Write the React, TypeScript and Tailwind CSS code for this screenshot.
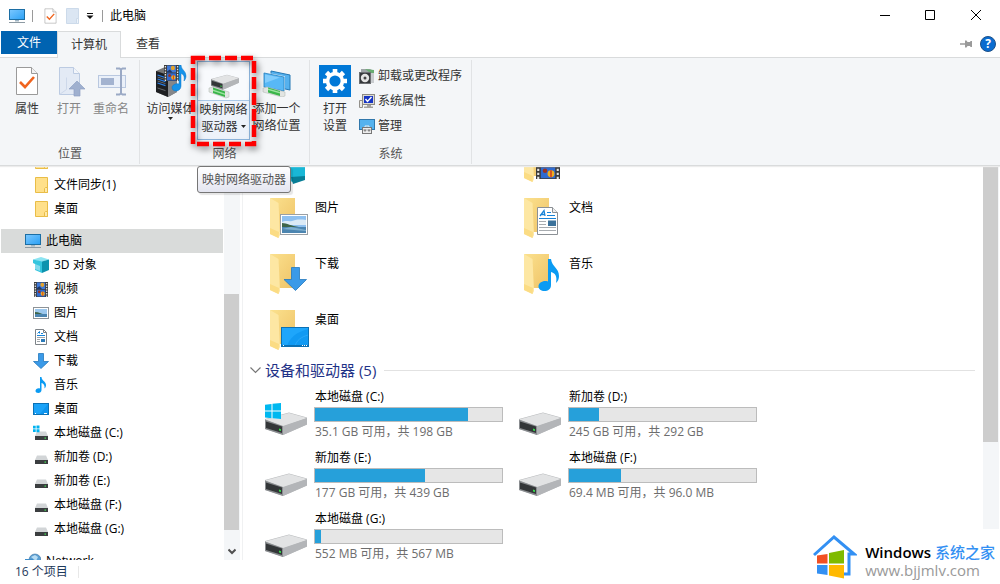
import type { ReactNode } from "react";

type IconProps = { className?: string };

function MonitorIcon({ className = "h-4 w-4" }: IconProps) {
  return (
    <svg viewBox="0 0 16 16" className={className} aria-hidden="true">
      <defs>
        <linearGradient id="screen" x1="0" y1="0" x2="1" y2="1">
          <stop offset="0" stopColor="#7cc8ff" />
          <stop offset="1" stopColor="#2aa0f5" />
        </linearGradient>
      </defs>
      <rect x="0.5" y="1.5" width="15" height="10" fill="url(#screen)" stroke="#1c6ea4" />
      <path d="M6 12h4v1.500H6z" fill="#9fb4c3" />
      <path d="M0 14.500h16" stroke="#8d9aa3" />
    </svg>
  );
}

function CheckDocIcon({ className }: IconProps) {
  return (
    <svg viewBox="0 0 24 30" className={className} aria-hidden="true">
      <path d="M1.500 1.500h15l6 6v21h-21z" fill="#fff" stroke="#9a9a9a" />
      <path d="M16.500 1.500v6h6" fill="#f2f2f2" stroke="#9a9a9a" />
      <path d="M5 16l5 5 9-10" fill="none" stroke="#f0641e" strokeWidth="2.600" />
    </svg>
  );
}

function OpenIcon() {
  return (
    <svg viewBox="0 0 32 32" className="h-8 w-8" aria-hidden="true">
      <path d="M6.500 2.500h14l6 6v21h-20z" fill="#e3eaf5" stroke="#bccbe2" />
      <path d="M20.500 2.500v6h6" fill="#f2f5fa" stroke="#bccbe2" />
      <path d="M6.500 29.500l7-5v-12" fill="none" stroke="#cdd8ea" />
      <path d="M24 16l8 8h-5v7h-6v-7h-5z" fill="#9fb0cf" stroke="#8fa2c4" strokeWidth="0.700" />
    </svg>
  );
}

function RenameIcon() {
  return (
    <svg viewBox="0 0 32 32" className="h-8 w-8" aria-hidden="true">
      <rect x="3.500" y="10.500" width="27" height="12" fill="#eaf0f9" stroke="#b9c8e0" />
      <rect x="6" y="13" width="13" height="7" fill="#a3b3d0" />
      <path d="M21 3.500h3.500l1.500 1 1.500-1H31M26 4.500v24M21 29.500h3.500l1.500-1 1.500 1H31" fill="none" stroke="#9aa9c5" strokeWidth="2" />
    </svg>
  );
}

function FilmStrip({ x, y, w, h }: { x: number; y: number; w: number; h: number }) {
  return (
    <svg x={x} y={y} width={w} height={h} viewBox="0 0 16 16" preserveAspectRatio="none">
      <rect width="16" height="16" fill="#3b3b3b" />
      <path d="M1.500 1v15M14.500 1v15" stroke="#e4e4e4" strokeWidth="1.400" strokeDasharray="1.500 1.200" />
      <rect x="3.200" y="0.500" width="9.600" height="7" fill="#3f79d8" />
      <rect x="3.200" y="8.300" width="9.600" height="7.200" fill="#2f6bd0" />
      <circle cx="9.500" cy="3" r="2.200" fill="#e4a32b" />
      <path d="M3.200 6.500l3-2 3 3h-6z" fill="#1d3768" />
      <circle cx="10" cy="12.500" r="2.300" fill="#f0b020" />
      <path d="M10 10.200v4.600" stroke="#d23b20" />
      <circle cx="6" cy="10.500" r="1.500" fill="#9b3320" />
    </svg>
  );
}

function MediaIcon() {
  return (
    <svg viewBox="0 0 32 32" className="h-8 w-8" aria-hidden="true">
      <path d="M1 6l9-4 12 4v21l-9 5-12-5z" fill="#777" />
      <path d="M1 6l12 4v22L1 27z" fill="#1d1f22" />
      <path d="M13 10l9-4v21l-9 5z" fill="#85878a" />
      <path d="M2.500 10l8 2.600M2.500 14l8 2.600M2.500 18l8 2.600" stroke="#2b7fe6" strokeWidth="1.300" />
      <path d="M2.500 12l8 2.600M2.500 16l8 2.600M2.500 23l8 2.600" stroke="#64686d" />
      <FilmStrip x={9} y={0} w={15} h={16} />
      <path d="M24 0h2c0 5 5 5.500 5 11 0 2-1 4-2 5 1-5-1-7-3-7.500V21c0 3-2.500 5-5 5s-4-1.500-4-3.500 3-4.500 7-3.500z" fill="#1593ea" stroke="#0d74c4" strokeWidth="0.500" />
    </svg>
  );
}

function DriveShape() {
  return (
    <>
      <path d="M0 16L24 9.500l18 5v7L18 32 0 26z" fill="#b8babc" />
      <path d="M0 16.500L24 10l18 5-24 8.500z" fill="#e2e3e4" />
      <path d="M18 23l24-8v6.500L18 32z" fill="#b3b5b8" />
      <path d="M0 16.500L18 23v9L0 26z" fill="#8a8d90" />
      <path d="M1 18.500l16 5v6.500L1 25z" fill="#333638" />
      <path d="M14 25.600l2 .7v1.700l-2-.6z" fill="#36e04b" />
    </>
  );
}

function DriveIcon({ system = false }: { system?: boolean }) {
  return (
    <svg viewBox="0 0 42 32" className="h-8 w-[42px]" aria-hidden="true">
      <DriveShape />
      {system && (
        <>
          <path d="M0 1.500L16 0v16L0 14.500z" fill="#fff" />
          <path d="M0 1.800l6.500-.9v6.600H0zM7.500.8L16 0v7.500H7.500zM0 8.500h6.500v6.700L0 14.500zM7.500 8.500H16V16l-8.500-.8z" fill="#00b8f0" />
        </>
      )}
    </svg>
  );
}

function MapDriveIcon() {
  return (
    <svg viewBox="0 0 32 32" className="h-8 w-8" aria-hidden="true">
      <path d="M1 21l4-1 16 5v5l-3 1-17-6z" fill="#e2e5e2" stroke="#aeb4ae" strokeWidth="0.500" />
      <path d="M5 20.500l12 4V30L5 26z" fill="#3bb54a" />
      <path d="M5 22.500l12 4v1.500l-12-4z" fill="#9be49f" />
      <svg x="3" y="1" width="28" height="22" viewBox="0 0 42 32">
        <DriveShape />
      </svg>
    </svg>
  );
}

function NetworkPlaceIcon() {
  return (
    <svg viewBox="0 0 32 32" className="h-8 w-8" aria-hidden="true">
      <path d="M10 6l19 4v15l-19-4z" fill="#55b1ee" stroke="#2578b4" />
      <path d="M3 8l20 4v14L3 22z" fill="#4fb0f4" stroke="#e6f2fb" strokeWidth="1.600" />
      <path d="M3 8l20 4v14L3 22z" fill="#58b8f6" stroke="#2a80bd" strokeWidth="0.800" />
      <path d="M4 9.500l15 3L4 18z" fill="#83cdfc" />
      <path d="M2 23l4-1 18 5v4l-3 1-19-5z" fill="#e2e5e2" stroke="#aeb4ae" strokeWidth="0.500" />
      <path d="M7 22.500l12 3.500v5L7 27.500z" fill="#3bb54a" />
      <path d="M7 23.500l12 3.500v1.500l-12-3.500z" fill="#9be49f" />
    </svg>
  );
}

function GearIcon() {
  return (
    <svg viewBox="0 0 32 32" className="h-8 w-8" aria-hidden="true">
      <rect width="32" height="32" fill="#0078d7" />
      <g stroke="#fff" strokeWidth="4.600">
        <path d="M16 4v24M4 16h24M7.500 7.500l17 17M24.500 7.500l-17 17" />
      </g>
      <circle cx="16" cy="16" r="9.200" fill="#fff" />
      <circle cx="16" cy="16" r="5.600" fill="#0078d7" />
    </svg>
  );
}

function UninstallIcon() {
  return (
    <svg viewBox="0 0 16 16" className="h-4 w-4" aria-hidden="true">
      <path d="M2 1h9l4 2v12H2z" fill="#9da3a6" />
      <path d="M6 1l9 1v5l-5-3z" fill="#69ad72" />
      <rect x="0.500" y="4.500" width="11" height="11" fill="#35383b" stroke="#6c6f72" />
      <circle cx="6" cy="10" r="4.200" fill="#e4e4e4" />
      <circle cx="6" cy="10" r="1.500" fill="#444" />
      <path d="M12 5h3v10h-3z" fill="#c9cccf" />
    </svg>
  );
}

function SystemPropsIcon() {
  return (
    <svg viewBox="0 0 16 16" className="h-4 w-4" aria-hidden="true">
      <path d="M0.500 7.500h3v7h-3z" fill="#eceae5" stroke="#92908a" />
      <rect x="3.500" y="1.500" width="12" height="10" fill="#dcdad3" stroke="#8d8b85" />
      <rect x="5" y="3" width="9" height="7" fill="#1735c4" />
      <path d="M6.500 6l2 2.500L12.500 4" fill="none" stroke="#fff" strokeWidth="1.400" />
      <path d="M8 12h4v1.500h2V15H5v-1.500h3z" fill="#a5a39d" />
    </svg>
  );
}

function ManageIcon() {
  return (
    <svg viewBox="0 0 16 16" className="h-4 w-4" aria-hidden="true">
      <rect x="0.500" y="1.500" width="15" height="10" fill="#55b2ee" stroke="#3077ab" />
      <path d="M6 9.500V8h4v1.500" fill="none" stroke="#efefef" />
      <rect x="3.500" y="9.500" width="9" height="6" fill="#ececec" stroke="#777" />
      <path d="M4 12h8" stroke="#999" strokeWidth="0.700" />
      <path d="M5.500 11.500h1v2h-1zM9.500 11.500h1v2h-1z" fill="#444" />
    </svg>
  );
}

function SmallFolderIcon() {
  return (
    <svg viewBox="0 0 16 16" className="h-4 w-4" aria-hidden="true">
      <path d="M2.500 0.500h12v15h-12z" fill="#ffe08a" stroke="#e9bd47" />
      <path d="M11.500 15.500v-4l1-1h2v5z" fill="#ffe9a8" stroke="#e9bd47" />
    </svg>
  );
}

function CubeIcon() {
  return (
    <svg viewBox="0 0 16 16" className="h-4 w-4" aria-hidden="true">
      <path d="M0 2.500L8 0l8 2.500L8 5z" fill="#8ce4f2" />
      <path d="M0 2.500L9 4.500V16l-7-3V7L0 6z" fill="#35c5de" />
      <path d="M9 4.500l7-2V13l-7 3z" fill="#0d93ae" />
      <path d="M2 7l5 2v5l-5-2z" fill="#82dbed" />
    </svg>
  );
}

function VideoIcon() {
  return (
    <svg viewBox="0 0 16 16" className="h-4 w-4" aria-hidden="true">
      <FilmStrip x={1} y={1} w={14} h={15} />
    </svg>
  );
}

function PhotoShape() {
  return (
    <>
      <rect x="0.500" y="0.500" width="27" height="20" fill="#fff" stroke="#9aa0a5" />
      <rect x="2" y="2" width="24" height="17" fill="#8ec0f0" />
      <path d="M2 8c4-2 7 0 10-1s6-2 14-1v5H2z" fill="#dbeaf6" />
      <path d="M2 9c5 0 9 3 17 4H2z" fill="#3d6549" />
      <path d="M2 13h24v6H2z" fill="#4c85b0" />
      <path d="M2 15l9-2 15 3v1z" fill="#7fb0cf" />
    </>
  );
}

function PictureIcon() {
  return (
    <svg viewBox="0 0 16 16" className="h-4 w-4" aria-hidden="true">
      <rect x="0.500" y="2.500" width="15" height="11" fill="#fff" stroke="#8d9398" />
      <rect x="2" y="4" width="12" height="8" fill="#9cc8ee" />
      <path d="M2 7c4 0 6 1.500 9 2.500H2z" fill="#3d6549" />
      <path d="M2 9h12v3H2z" fill="#4c85b0" />
    </svg>
  );
}

function DocShape() {
  return (
    <>
      <path d="M0.500 0.500h15l5 5v22h-20z" fill="#fff" stroke="#8b9095" />
      <path d="M15.500 0.500v5h5" fill="#eee" stroke="#8b9095" />
      <path d="M3 9L7 3.500 8 9M4.500 7.500h3.500" fill="none" stroke="#1683d8" strokeWidth="1.300" />
      <path d="M10 5.500h4M10 8.500h8M2 11.500h17" stroke="#1683d8" />
      <path d="M2 14.500h7M2 17.500h7M2 20.500h17M2 23.500h17" stroke="#a8acb0" />
      <rect x="11" y="13.500" width="8" height="5.500" fill="#3c729b" />
    </>
  );
}

function DocumentIcon() {
  return (
    <svg viewBox="0 0 16 16" className="h-4 w-4" aria-hidden="true">
      <path d="M2.500 0.500h8l3 3v12h-11z" fill="#fff" stroke="#7d8388" />
      <path d="M10.500 0.500v3h3" fill="none" stroke="#7d8388" />
      <path d="M4.500 4.500l2-2v2M8 4.500h2M4 6.500h8" fill="none" stroke="#1683d8" />
      <path d="M4 8.500h8M4 10.500h3M4 12.500h3" stroke="#a0a5a9" />
      <rect x="8" y="10" width="4" height="3" fill="#2b7ab8" />
    </svg>
  );
}

function DownloadIcon() {
  return (
    <svg viewBox="0 0 16 16" className="h-4 w-4" aria-hidden="true">
      <path d="M5.500 0.500h5v8h5L8 15.500 0.500 8.500h5z" fill="#3b9ae8" stroke="#2578bd" strokeWidth="0.800" />
    </svg>
  );
}

function MusicIcon() {
  return (
    <svg viewBox="0 0 16 16" className="h-4 w-4" aria-hidden="true">
      <path d="M7 0h1.500c0 3.500 4.500 4.500 4.500 8 0 1.500-.5 2.500-1.500 3.500C12 8 10.500 6.500 8.500 6v7c0 2-1.600 3-3.200 3S2.500 15.200 2.500 14c0-1.800 2.200-3.300 4.500-2.500z" fill="#0a9bf3" />
    </svg>
  );
}

function DesktopIcon() {
  return (
    <svg viewBox="0 0 16 16" className="h-4 w-4" aria-hidden="true">
      <rect x="0.500" y="2.500" width="15" height="11" fill="#1ba3f8" stroke="#0b71b5" />
      <path d="M15 3L7 13h8z" fill="#0f95ee" />
      <path d="M2 12.500h1M11 12.500h3" stroke="#fff" />
    </svg>
  );
}

function SmallDriveIcon({ system = false }: { system?: boolean }) {
  return (
    <svg viewBox="0 0 16 16" className="h-4 w-4" aria-hidden="true">
      <path d="M4 6.500h9l2 4.500H2z" fill="#d2d5d7" />
      <rect x="2" y="11" width="13" height="4" fill="#3b3e40" />
      <rect x="11.500" y="12.500" width="1.500" height="1.200" fill="#42e355" />
      {system && <path d="M0 .8h2.700v2.700H0zM3.500.5h3v3h-3zM0 4.300h2.700V7H0zM3.500 4.300h3v3h-3z" fill="#00b2f0" />}
    </svg>
  );
}

function NetworkIcon() {
  return (
    <svg viewBox="0 0 16 16" className="h-4 w-4" aria-hidden="true">
      <circle cx="10" cy="7" r="6" fill="#5b9fd3" stroke="#376f9f" strokeWidth="0.600" />
      <path d="M6 4l4-2 3 2-2 4z" fill="#b7dcf3" />
      <path d="M0 6h8v6H0z" fill="#3d8cc9" />
    </svg>
  );
}

function FolderBase({ children }: { children: ReactNode }) {
  return (
    <svg viewBox="0 0 44 42" className="h-[42px] w-11" aria-hidden="true">
      <defs>
        <linearGradient id="folder" x1="0" y1="0" x2="1" y2="1">
          <stop offset="0" stopColor="#fbe18e" />
          <stop offset="1" stopColor="#efc367" />
        </linearGradient>
      </defs>
      <path d="M5 0h25v34H13z" fill="url(#folder)" />
      <path d="M5 0l8.500 5 1.500 32-1.500 3L5 36z" fill="#fde7a3" />
      <path d="M5 30l9 4-.5 6L5 36z" fill="#fbdc84" />
      {children}
    </svg>
  );
}

// The first row is scrolled half out of view, so only its icons remain.
const scrolledFolders: { name: string; art: ReactNode }[] = [
  {
    name: "3D 对象",
    art: (
      <>
        <path d="M16 18l12-4 12 4v18l-12 4-12-4z" fill="#19b7d6" />
        <path d="M26 35l14-1v4l-12 4z" fill="#087e96" />
      </>
    ),
  },
  { name: "视频", art: <FilmStrip x={17} y={13} w={24} h={24} /> },
];

const folders: { name: string; art: ReactNode }[] = [
  {
    name: "图片",
    art: (
      <svg x="15" y="16" width="28" height="21" viewBox="0 0 28 21">
        <PhotoShape />
      </svg>
    ),
  },
  {
    name: "文档",
    art: (
      <svg x="18" y="9" width="21" height="28" viewBox="0 0 21 28">
        <DocShape />
      </svg>
    ),
  },
  {
    name: "下载",
    art: <path d="M26.500 13.500h8v12h7L30.500 36.500 19 25.500h7.500z" fill="#3b9ae8" stroke="#2578bd" strokeWidth="0.800" />,
  },
  {
    name: "音乐",
    art: (
      <path d="M29 5h3c1 8 8 9 8 17 0 3-1 5-3 7 1.500-7-1-10-5-11v13c0 4-3 6-6.500 6s-6-2-6-4.500c0-4 5-6.500 9.500-5z" fill="#0a9bf3" />
    ),
  },
  {
    name: "桌面",
    art: (
      <>
        <rect x="16.500" y="17.500" width="27" height="19" fill="#1ea6fb" stroke="#0b71b5" />
        <path d="M22 36c3-9 10-14 21-17v17z" fill="#119af3" />
        <path d="M30 36c2-6 6-9 13-11" fill="none" stroke="#2aa8f8" />
        <path d="M17 35.500h26" stroke="#0b71b5" />
        <path d="M18 35.500h1M37 35.500h5" stroke="#fff" strokeDasharray="1 1" />
      </>
    ),
  },
];

const drives = [
  { name: "本地磁盘 (C:)", detail: "35.1 GB 可用，共 198 GB", used: 82, system: true },
  { name: "新加卷 (D:)", detail: "245 GB 可用，共 292 GB", used: 16 },
  { name: "新加卷 (E:)", detail: "177 GB 可用，共 439 GB", used: 59 },
  { name: "本地磁盘 (F:)", detail: "69.4 MB 可用，共 96.0 MB", used: 28 },
  { name: "本地磁盘 (G:)", detail: "552 MB 可用，共 567 MB", used: 3 },
];

const computerItems: { name: string; icon: ReactNode }[] = [
  { name: "3D 对象", icon: <CubeIcon /> },
  { name: "视频", icon: <VideoIcon /> },
  { name: "图片", icon: <PictureIcon /> },
  { name: "文档", icon: <DocumentIcon /> },
  { name: "下载", icon: <DownloadIcon /> },
  { name: "音乐", icon: <MusicIcon /> },
  { name: "桌面", icon: <DesktopIcon /> },
  { name: "本地磁盘 (C:)", icon: <SmallDriveIcon system /> },
  { name: "新加卷 (D:)", icon: <SmallDriveIcon /> },
  { name: "新加卷 (E:)", icon: <SmallDriveIcon /> },
  { name: "本地磁盘 (F:)", icon: <SmallDriveIcon /> },
  { name: "本地磁盘 (G:)", icon: <SmallDriveIcon /> },
];

function CaretDown() {
  return (
    <svg viewBox="0 0 5 3" className="h-[3px] w-[5px]" aria-hidden="true">
      <path d="M0 0h5L2.500 3z" fill="#222" />
    </svg>
  );
}

function TitleBar() {
  const windowButton = "flex h-[31px] w-[46px] items-center justify-center";
  return (
    <header className="flex h-[31px] shrink-0 items-center pl-[9px]">
      <MonitorIcon />
      <span className="ml-[7px] h-3 w-px bg-[#9a9a9a]" />
      <button type="button" aria-label="属性" className="ml-[11px]">
        <CheckDocIcon className="h-4 w-[13px]" />
      </button>
      <button type="button" aria-label="新建文件夹" className="ml-[9px]">
        <svg viewBox="0 0 13 16" className="h-4 w-[13px]" aria-hidden="true">
          <path d="M0.500 0.500h12v15h-12z" fill="#dbe6f3" stroke="#ccdaea" />
          <path d="M10.500 15.500v-5h2v5z" fill="#eef4fa" stroke="#ccdaea" />
        </svg>
      </button>
      <button type="button" aria-label="自定义快速访问工具栏" className="ml-[7px]">
        <svg viewBox="0 0 8 6" className="h-1.5 w-2" aria-hidden="true">
          <path d="M1 .5h6" stroke="#111" />
          <path d="M0.500 2.500h7L4 6z" fill="#111" />
        </svg>
      </button>
      <span className="ml-2 h-3 w-px bg-[#9a9a9a]" />
      <h1 className="ml-[7px] leading-5">此电脑</h1>
      <div className="ml-auto flex pr-px">
        <button type="button" aria-label="最小化" className={windowButton}>
          <svg viewBox="0 0 11 11" className="h-[11px] w-[11px]" aria-hidden="true">
            <path d="M1 5.500h10" stroke="#000" />
          </svg>
        </button>
        <button type="button" aria-label="最大化" className={windowButton}>
          <svg viewBox="0 0 11 11" className="h-[11px] w-[11px]" aria-hidden="true">
            <path d="M.5 .5h9v9h-9z" fill="none" stroke="#000" />
          </svg>
        </button>
        <button type="button" aria-label="关闭" className={windowButton}>
          <svg viewBox="0 0 11 11" className="h-[11px] w-[11px]" aria-hidden="true">
            <path d="M0 0l10 10M10 0L0 10" stroke="#000" />
          </svg>
        </button>
      </div>
    </header>
  );
}

function Tabs() {
  return (
    <nav className="flex h-[26px] shrink-0 pl-px">
      <button type="button" className="h-[23px] w-14 bg-[#0063b1] text-white">
        文件
      </button>
      <button
        type="button"
        className="z-20 -mb-px w-16 border border-b-0 border-[#d9dbdc] bg-[#f4f6f8] text-[#333]"
      >
        计算机
      </button>
      <button type="button" className="w-[54px] text-[#333]">
        查看
      </button>
      <div className="ml-auto flex items-center gap-2 pr-1">
        <button type="button" aria-label="固定功能区">
          <svg viewBox="0 0 12 8" className="h-2 w-3" aria-hidden="true">
            <path d="M0 4h5" stroke="#9a9a9a" strokeWidth="1.500" />
            <path d="M5 .5h1.500L7.500 2H10l.5-1H12v6h-1.500L10 6H7.500l-1 1.500H5z" fill="#9a9a9a" />
          </svg>
        </button>
        <button
          type="button"
          aria-label="帮助"
          className="flex h-4 w-4 items-center justify-center rounded-full border border-[#1d5088] bg-[#0a6cd0] text-[12px] font-bold text-white"
        >
          ?
        </button>
      </div>
    </nav>
  );
}

function RibbonGroup({ label, className, children }: { label: string; className: string; children: ReactNode }) {
  return (
    <section aria-label={label} className="mt-0.5 mb-px flex flex-col border-r border-[#e1e3e5]">
      <div className={`flex flex-1 items-start pt-px ${className}`}>{children}</div>
      <div className="text-center leading-5 text-[#555]">{label}</div>
    </section>
  );
}

function BigButton({ icon, width, disabled, children }: { icon: ReactNode; width: string; disabled?: boolean; children: ReactNode }) {
  return (
    <button
      type="button"
      disabled={disabled}
      className={`flex shrink-0 flex-col items-center pt-1 leading-[17px] whitespace-nowrap ${width} ${disabled ? "text-[#868686]" : "text-[#333]"}`}
    >
      {icon}
      <span className="mt-[3px] flex flex-col items-center">{children}</span>
    </button>
  );
}

function Ribbon() {
  const smallButton = "flex h-[25px] items-center gap-[3px] text-left text-[#333]";
  return (
    <div className="relative z-10 flex h-[109px] shrink-0 border-y border-[#d9dbdc] bg-[#f4f6f8] pl-px shadow-[0_1px_1px_#ececec]">
      <RibbonGroup label="位置" className="pr-[7px] pl-[5px]">
        <BigButton icon={<span className="flex h-8 w-8 items-center justify-center"><CheckDocIcon className="h-[30px] w-6" /></span>} width="w-[42px]">
          属性
        </BigButton>
        <BigButton icon={<OpenIcon />} width="w-[42px]" disabled>
          打开
        </BigButton>
        <BigButton icon={<RenameIcon />} width="w-[42px]" disabled>
          重命名
        </BigButton>
      </RibbonGroup>

      <RibbonGroup label="网络" className="pr-[6px] pl-[4px]">
        <BigButton icon={<MediaIcon />} width="w-[53px]">
          访问媒体
          <CaretDown />
        </BigButton>
        <div className="relative">
          <button
            type="button"
            aria-describedby="map-drive-tip"
            className="flex w-[53px] flex-col items-center border border-[#8db5de] bg-[#f8fafd] leading-[17px] text-[#333]"
          >
            <span className="flex h-[39px] w-full items-center justify-center border-b border-[#a9c8e8] pt-1">
              <MapDriveIcon />
            </span>
            <span className="w-full bg-[#edf2fa] pb-1 whitespace-nowrap">
              映射网络
              <span className="flex items-center justify-center gap-[3px]">
                驱动器
                <CaretDown />
              </span>
            </span>
          </button>
          <svg
            viewBox="0 0 66 91"
            className="pointer-events-none absolute -top-[5px] -left-[6px] z-10 h-[91px] w-[66px] overflow-visible drop-shadow-[2px_3px_3px_#00000080]"
            aria-hidden="true"
          >
            <rect x="2" y="2" width="61" height="86" fill="none" stroke="#fe0000" strokeWidth="4.500" strokeDasharray="12 4" />
          </svg>
          <div
            id="map-drive-tip"
            role="tooltip"
            className="absolute top-[105px] left-0 z-20 rounded-[3px] border border-[#767676] bg-linear-to-b from-white to-[#e4e5f0] px-1 pt-[3px] pb-0.5 leading-5 whitespace-nowrap text-[#555] shadow-[2px_2px_1px_#0000001a]"
          >
            映射网络驱动器
          </div>
        </div>
        <BigButton icon={<NetworkPlaceIcon />} width="w-[53px]">
          <span>添加一个</span>
          <span>网络位置</span>
        </BigButton>
      </RibbonGroup>

      <RibbonGroup label="系统" className="pr-[9px] pl-[4px]">
        <BigButton icon={<GearIcon />} width="w-[42px]">
          <span>打开</span>
          <span>设置</span>
        </BigButton>
        <div className="flex flex-col pt-0.5 pl-[3px]">
          <button type="button" className={smallButton}>
            <UninstallIcon />
            卸载或更改程序
          </button>
          <button type="button" className={smallButton}>
            <SystemPropsIcon />
            系统属性
          </button>
          <button type="button" className={smallButton}>
            <ManageIcon />
            管理
          </button>
        </div>
      </RibbonGroup>
    </div>
  );
}

function TreeItem({ icon, name, root, selected }: { icon: ReactNode; name: string; root?: boolean; selected?: boolean }) {
  return (
    <li>
      <button
        type="button"
        className={`flex h-6 w-full items-center gap-[5px] text-left ${root ? "pl-6" : "pl-8"} ${selected ? "bg-[#d9dbda]" : ""}`}
      >
        {icon}
        {name}
      </button>
    </li>
  );
}

function Sidebar() {
  return (
    <aside className="flex w-[243px] shrink-0 overflow-hidden border-r border-[#f0f1f2] pl-px">
      <div className="w-[222px]">
        <ul className="-mt-[17px]">
          <li>
            <button type="button" aria-label="下载" className="flex h-6 w-full items-center pl-8">
              <SmallFolderIcon />
            </button>
          </li>
          <TreeItem icon={<SmallFolderIcon />} name="文件同步(1)" />
          <TreeItem icon={<SmallFolderIcon />} name="桌面" />
        </ul>
        <ul className="mt-2">
          <TreeItem icon={<MonitorIcon />} name="此电脑" root selected />
          {computerItems.map((item) => (
            <TreeItem key={item.name} icon={item.icon} name={item.name} />
          ))}
        </ul>
        <ul className="mt-2">
          <TreeItem icon={<NetworkIcon />} name="Network" root />
        </ul>
      </div>
      <div className="ml-px flex w-4 flex-col bg-[#f4f6f8] pt-32">
        <div className="w-[15px] flex-1 bg-[#cdcdcd]" />
        <div className="flex h-[30px] items-end justify-center pb-1">
          <svg viewBox="0 0 8 8" className="h-2 w-2" aria-hidden="true">
            <path d="M.5 1.500L4 5l3.500-3.500" fill="none" stroke="#505050" strokeWidth="2" />
          </svg>
        </div>
      </div>
    </aside>
  );
}

function Content() {
  return (
    <main className="min-w-0 flex-1 overflow-hidden pr-2">
      <div className="-mt-6 grid grid-cols-[254px_254px] gap-y-[14px] pl-[22px]">
        {scrolledFolders.map((folder) => (
          <button key={folder.name} type="button" aria-label={folder.name} className="flex h-[42px] items-start">
            <FolderBase>{folder.art}</FolderBase>
          </button>
        ))}
        {folders.map((folder) => (
          <button key={folder.name} type="button" className="flex h-[42px] items-start gap-[6px] text-left leading-5">
            <FolderBase>{folder.art}</FolderBase>
            {folder.name}
          </button>
        ))}
      </div>
      <h2 className="mt-2 flex h-5 items-center pl-[7px] text-[15px] leading-5 text-[#1e3287]">
        <svg viewBox="0 0 11 7" className="mr-1 h-[7px] w-[11px]" aria-hidden="true">
          <path d="M.5 .5l5 5 5-5" fill="none" stroke="#777" strokeWidth="1.200" />
        </svg>
        设备和驱动器 (5)
        <span className="ml-2 h-px flex-1 bg-[#e2e2e2]" />
      </h2>
      <div className="mt-[7px] grid grid-cols-[254px_254px] gap-y-1.5 pl-[22px]">
        {drives.map((drive) => (
          <button key={drive.name} type="button" className="flex items-start gap-[7px] text-left leading-5">
            <span className="pt-4">
              <DriveIcon system={drive.system} />
            </span>
            <span className="block w-[189px]">
              <span className="block pl-px">{drive.name}</span>
              <span className="block h-[15px] border border-[#bcbcbc] bg-[#e6e6e6]">
                <span className="block h-full bg-[#26a0da]" style={{ width: `${drive.used}%` }} />
              </span>
              <span className="block pl-px whitespace-nowrap text-[#6d6d6d]">{drive.detail}</span>
            </span>
          </button>
        ))}
      </div>
    </main>
  );
}

function Watermark() {
  return (
    <div className="absolute right-0 bottom-0 z-20 flex h-[55px] items-center gap-2 bg-white pr-[5px] pl-2">
      <svg viewBox="0 0 44 44" className="h-11 w-11" aria-hidden="true">
        <path d="M1 20L21 2l20 17h-5v20h-5" fill="none" stroke="#3390f3" strokeWidth="3" />
        <path d="M4 20.500l10.500-1.500v9.500H4z" fill="#f25022" />
        <path d="M16 18l15-3v13.500H16z" fill="#7fba00" />
        <path d="M4 30h10.500v10L4 38.500z" fill="#3390f3" />
        <path d="M16 30h15v13.500L16 40.500z" fill="#ffb900" />
      </svg>
      <div className="pt-2 text-[15px] leading-[18px] whitespace-nowrap">
        <div className="font-semibold">
          Windows <span className="font-medium text-[#3390f3]">系统之家</span>
        </div>
        <div className="text-[#999]">www.bjjmlv.com</div>
      </div>
    </div>
  );
}

export default function App() {
  return (
    <div className="relative flex h-screen flex-col overflow-hidden bg-white font-['Open_Sans','Noto_Sans_CJK_SC',sans-serif] text-[12px] text-black">
      <TitleBar />
      <Tabs />
      <Ribbon />
      <div className="flex min-h-0 flex-1">
        <Sidebar />
        <Content />
        <div className="mr-px w-4 shrink-0 bg-[#f4f6f8]">
          <div className="h-[70%] w-[15px] bg-[#cdcdcd]" />
        </div>
      </div>
      <footer className="flex h-6 shrink-0 items-center pl-[15px] text-[#1e395b]">
        16 个项目
        <span className="ml-[10px] h-3 w-px bg-[#e8e8e8]" />
      </footer>
      <Watermark />
    </div>
  );
}
